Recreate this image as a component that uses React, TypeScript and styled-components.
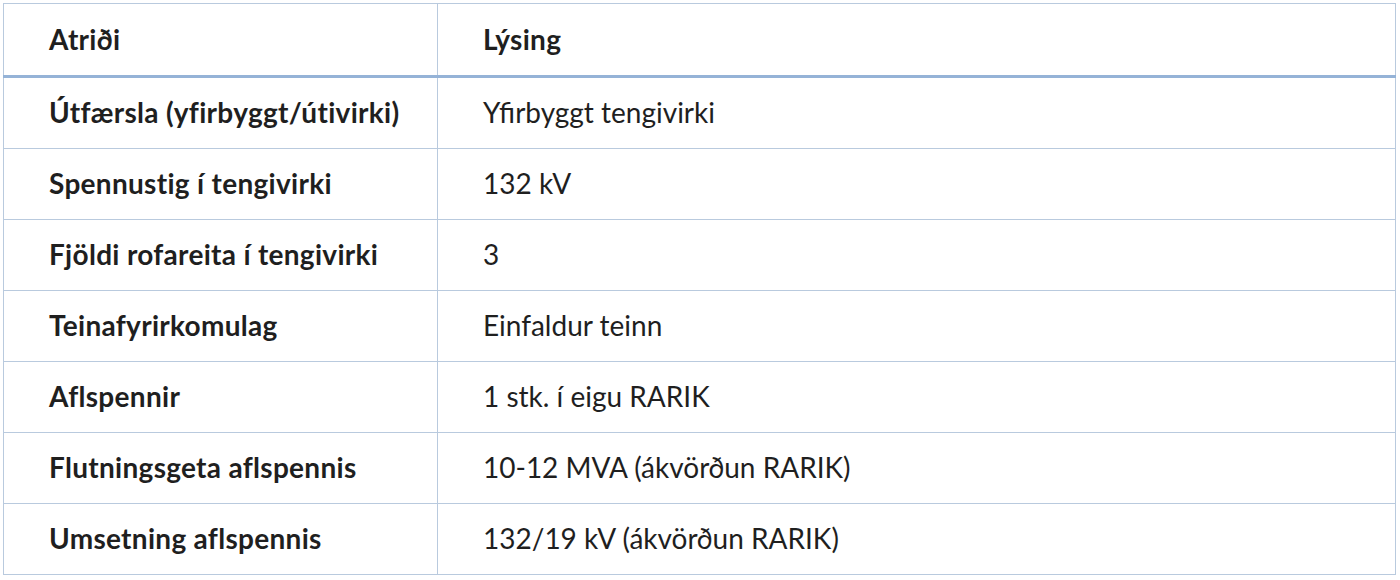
import styled, { createGlobalStyle } from 'styled-components';

const GlobalStyle = createGlobalStyle`
  body {
    margin: 3px;
    background: #ffffff;
    font-family: Lato, "Open Sans", sans-serif;
    color: #1f1f1f;
  }
`;

const Table = styled.table`
  width: 1393px;
  border-collapse: collapse;
  table-layout: fixed;
  font-size: 28px;
  line-height: 1.2;
`;

const HeadCell = styled.th`
  height: 71px;
  padding: 0 0 0 45px;
  text-align: left;
  font-weight: 700;
  letter-spacing: 0.3px;
  border: 1px solid #b9cade;
  border-bottom: 3px solid #95b3d7;
`;

const Cell = styled.td<{ $bold?: boolean }>`
  height: 70px;
  padding: 0 0 0 45px;
  font-weight: ${(props) => (props.$bold ? 700 : 400)};
  letter-spacing: ${(props) => (props.$bold ? '0.3px' : '0')};
  border: 1px solid #b9cade;
`;

const rows: [string, string][] = [
  ['Útfærsla (yfirbyggt/útivirki)', 'Yfirbyggt tengivirki'],
  ['Spennustig í tengivirki', '132 kV'],
  ['Fjöldi rofareita í tengivirki', '3'],
  ['Teinafyrirkomulag', 'Einfaldur teinn'],
  ['Aflspennir', '1 stk. í eigu RARIK'],
  ['Flutningsgeta aflspennis', '10-12 MVA (ákvörðun RARIK)'],
  ['Umsetning aflspennis', '132/19 kV (ákvörðun RARIK)'],
];

const App = () => {
  return (
    <>
      <GlobalStyle />
      <Table>
        <colgroup>
          <col style={{ width: 434 }} />
          <col />
        </colgroup>
        <thead>
          <tr>
            <HeadCell>Atriði</HeadCell>
            <HeadCell>Lýsing</HeadCell>
          </tr>
        </thead>
        <tbody>
          {rows.map(([item, desc]) => (
            <tr key={item}>
              <Cell $bold>{item}</Cell>
              <Cell>{desc}</Cell>
            </tr>
          ))}
        </tbody>
      </Table>
    </>
  );
};

export default App;
